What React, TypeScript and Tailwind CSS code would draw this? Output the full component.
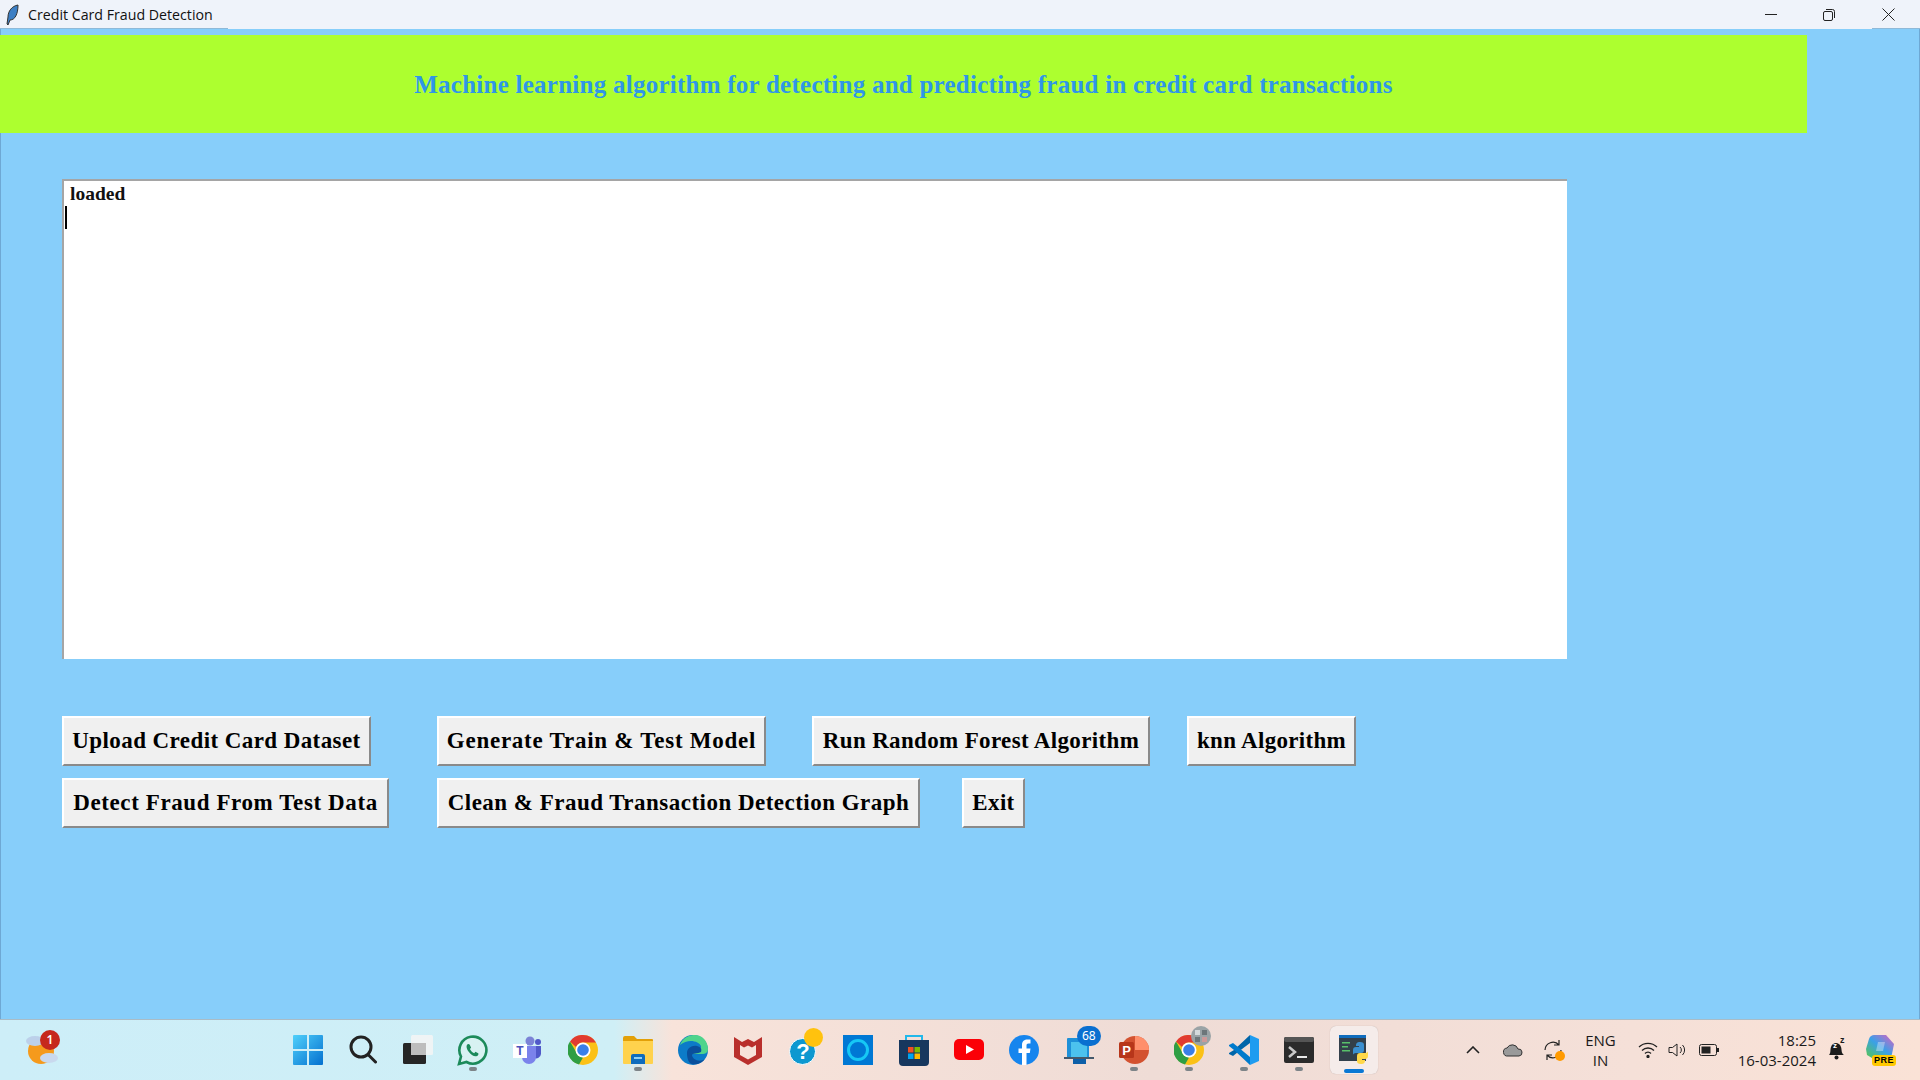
import type { ReactNode } from "react";

const serif = "font-['Liberation_Serif',serif]";

function TkButton({ label, width, className = "" }: { label: string; width: number; className?: string }) {
  return (
    <button
      style={{ width }}
      className={`h-[50px] shrink-0 border-2 border-t-white border-l-white border-r-[#8a8a8a] border-b-[#8a8a8a] bg-[#f0f0f0] text-center text-[23px] font-bold whitespace-nowrap text-black ${serif} ${className}`}
    >
      {label}
    </button>
  );
}

function Dot({ active }: { active?: boolean }) {
  return (
    <span
      className={
        active
          ? "absolute bottom-[1px] left-1/2 h-[4px] w-[20px] -translate-x-1/2 rounded-full bg-[#0a78d4]"
          : "absolute bottom-[3px] left-1/2 h-[4px] w-[8px] -translate-x-1/2 rounded-full bg-[#7d8488]"
      }
    />
  );
}

function Slot({ children, dot, active }: { children: ReactNode; dot?: boolean; active?: boolean }) {
  return (
    <div className="relative flex h-[48px] w-[55.1px] shrink-0 items-center justify-center">
      {active && (
        <span className="absolute top-0 left-[3.5px] h-[48px] w-[48px] rounded-md bg-[#f5ecea] shadow-[0_0_1px_rgba(0,0,0,0.25)]" />
      )}
      <div className="relative flex items-center justify-center">{children}</div>
      {dot && <Dot active={active} />}
    </div>
  );
}

function Badge({ n }: { n: string }) {
  return (
    <span className="absolute top-[-10px] left-[13px] flex h-[20px] w-[24px] items-center justify-center rounded-full bg-[#0a6fd0] font-['Noto_Sans',sans-serif] text-[12px] text-white">
      {n}
    </span>
  );
}

const WinLogo = () => (
  <svg width="30" height="30" viewBox="0 0 30 30">
    <defs>
      <linearGradient id="wl" x1="0" y1="0" x2="1" y2="1">
        <stop offset="0" stopColor="#4fd0fb" />
        <stop offset="1" stopColor="#0470cf" />
      </linearGradient>
    </defs>
    <path d="M0 1a1 1 0 0 1 1-1h13v14H0zM16 0h13a1 1 0 0 1 1 1v13H16zM0 16h14v14H1a1 1 0 0 1-1-1zM16 16h14v13a1 1 0 0 1-1 1H16z" fill="url(#wl)" />
  </svg>
);

const SearchIcon = () => (
  <svg width="28" height="30" viewBox="0 0 28 30" fill="none" stroke="#222" strokeWidth="3">
    <circle cx="12" cy="12" r="10" />
    <path d="M19.5 20l7 7" strokeLinecap="round" />
  </svg>
);

const TaskView = () => (
  <svg width="30" height="30" viewBox="0 0 30 30">
    <rect x="0" y="8" width="23" height="21" rx="1.5" fill="#262626" />
    <rect x="8" y="0" width="22" height="20" rx="1.5" fill="#f4f4f4" opacity="0.85" />
    <rect x="8" y="8" width="15" height="12" fill="#bdbdbd" />
  </svg>
);

const WhatsApp = () => (
  <svg width="31" height="31" viewBox="0 0 31 31" fill="none">
    <path d="M2 29l2-7.5A13.5 13.5 0 1 1 9.500 27z" stroke="#1c8a5a" strokeWidth="2.600" fill="#d8f2f2" />
    <path d="M11 9c-2 1-2 4 .5 7.500s6 5.500 8.500 4.500c1.500-.7 1.700-2.300 1.200-2.800l-2.700-1.400-1.300 1.500c-2-.8-3.400-2.300-4.300-4.200l1.200-1.300-1.300-3c-.5-.7-1.100-.9-1.800-.8z" fill="#1c8a5a" />
  </svg>
);

const Teams = () => (
  <svg width="30" height="28" viewBox="0 0 30 28">
    <circle cx="17" cy="5" r="4.500" fill="#7b83d6" />
    <circle cx="25" cy="6" r="3" fill="#5059c9" />
    <path d="M20 10h8v8a5 5 0 0 1-7 4z" fill="#5059c9" />
    <path d="M9 10h14v11a7 7 0 0 1-14 0z" fill="#7b83eb" />
    <rect x="0" y="8" width="14" height="14" fill="#fff" />
    <text x="7" y="19" textAnchor="middle" fontSize="12" fontWeight="700" fontFamily="Liberation Sans" fill="#4b53bc">T</text>
  </svg>
);

const Chrome = () => (
  <svg width="30" height="30" viewBox="0 0 30 30">
    <circle cx="15" cy="15" r="15" fill="#fbc116" />
    <path d="M15 0a15 15 0 0 1 13 7.500H15a7.500 7.500 0 0 0-7 4.500L2 6.500A15 15 0 0 1 15 0z" fill="#e13b30" />
    <path d="M2 6.500l7 12a7.500 7.500 0 0 0 6 4l-4 7A15 15 0 0 1 2 6.500z" fill="#2f9e44" />
    <circle cx="15" cy="15" r="7.500" fill="#fff" />
    <circle cx="15" cy="15" r="5.800" fill="#3a7fe8" />
  </svg>
);

const Folder = () => (
  <svg width="30" height="28" viewBox="0 0 30 28">
    <path d="M0 2a2 2 0 0 1 2-2h9l3 3h15a1 1 0 0 1 1 1v3H0z" fill="#e3a008" />
    <path d="M0 5h30v22a1 1 0 0 1-1 1H1a1 1 0 0 1-1-1z" fill="#ffd24d" />
    <path d="M8 20a2 2 0 0 1 2-2h10a2 2 0 0 1 2 2v8H8z" fill="#0f6cbd" />
    <rect x="11" y="21" width="8" height="2" fill="#8ed0f5" />
  </svg>
);

const Edge = () => (
  <svg width="30" height="30" viewBox="0 0 30 30">
    <circle cx="15" cy="15" r="15" fill="#0c7bc8" />
    <path d="M2 10C5 2 12 0 17 0c7 0 13 6 13 14 0 4-3 5-6 5H14c1-5 10-2 9-8C21 6 10 3 2 10z" fill="#4fd48c" />
    <path d="M9 18c0-5 5-8 10-7 4 1 5 3 4 6-3 2-9 1-9 3 0 4 7 8 13 4-3 4-8 6-13 5-4-1-5-7-5-11z" fill="#0a4f9c" />
  </svg>
);

const McAfee = () => (
  <svg width="28" height="30" viewBox="0 0 28 30">
    <path d="M0 2l8 5 6-3 6 3 8-5v20l-14 8-14-8zM6 10v10l8 4.500 8-4.500V10l-4 2.500-4-2-4 2z" fill="#b92f2c" />
  </svg>
);

const HelpIcon = () => (
  <div className="relative h-[30px] w-[34px]">
    <span className="absolute top-[3px] left-[3px] flex h-[27px] w-[27px] items-center justify-center rounded-full border border-white bg-[#0e98d0] font-['Liberation_Sans',sans-serif] text-[22px] font-bold text-white">
      ?
    </span>
    <span className="absolute top-[-7px] left-[18px] h-[19px] w-[19px] rounded-full bg-[#ffc20e]" />
  </div>
);

const Alexa = () => (
  <div className="flex h-[30px] w-[30px] items-center justify-center bg-[#0078d4]">
    <span className="h-[22px] w-[22px] rounded-full border-[3px] border-[#16c8f5]" />
  </div>
);

const Store = () => (
  <svg width="30" height="31" viewBox="0 0 30 31">
    <path d="M7 5V1h16v4" fill="none" stroke="#22b8ea" strokeWidth="2" />
    <path d="M0 5h30v22a4 4 0 0 1-4 4H4a4 4 0 0 1-4-4z" fill="#17375e" />
    <rect x="9" y="12" width="5.500" height="5.500" fill="#f25022" />
    <rect x="15.500" y="12" width="5.500" height="5.500" fill="#7fba00" />
    <rect x="9" y="18.500" width="5.500" height="5.500" fill="#00a4ef" />
    <rect x="15.500" y="18.500" width="5.500" height="5.500" fill="#ffb900" />
  </svg>
);

const YouTube = () => (
  <svg width="30" height="22" viewBox="0 0 30 22">
    <rect width="30" height="21" rx="5" fill="#fb0007" />
    <path d="M12 6l8 4.500-8 4.500z" fill="#fff" />
  </svg>
);

const Facebook = () => (
  <svg width="30" height="30" viewBox="0 0 30 30">
    <circle cx="15" cy="15" r="15" fill="#1685ee" />
    <path d="M13 30V18H9.500v-4.500H13V10c0-4 2.500-5.500 5.500-5.500h3v4h-2c-1.500 0-2 .7-2 2v3h4l-.7 4.500H17.500v12z" fill="#fff" />
  </svg>
);

const MailDevice = () => (
  <svg width="30" height="28" viewBox="0 0 30 28">
    <rect x="3" y="2" width="22" height="20" rx="1" fill="#1e90d8" />
    <rect x="7" y="6" width="16" height="16" fill="#4cc2ee" />
    <rect x="0" y="21" width="30" height="2" fill="#44586b" />
    <rect x="9" y="23" width="13" height="5" fill="#0d5fa8" />
  </svg>
);

const PowerPoint = () => (
  <svg width="30" height="30" viewBox="0 0 30 30">
    <circle cx="16" cy="15" r="14" fill="#d35230" />
    <path d="M16 1a14 14 0 0 1 14 14H16z" fill="#ff8f6b" />
    <rect x="0" y="7" width="15" height="16" rx="1.500" fill="#b7361a" />
    <text x="7.500" y="20" textAnchor="middle" fontSize="13" fontWeight="700" fontFamily="Liberation Sans" fill="#fff">P</text>
  </svg>
);

const Avatar = () => (
  <svg className="absolute top-[-9px] left-[17px]" width="20" height="20" viewBox="0 0 20 20">
    <circle cx="10" cy="10" r="10" fill="#9aa3a6" />
    <rect x="4" y="4" width="5" height="5" fill="#d5dadc" />
    <rect x="11" y="4" width="5" height="5" fill="#6c767a" />
    <rect x="4" y="11" width="5" height="5" fill="#6c767a" />
    <rect x="11" y="11" width="5" height="5" fill="#c99" />
  </svg>
);

const VSCode = () => (
  <svg width="30" height="30" viewBox="0 0 30 30">
    <path d="M21 0l9 4v22l-9 4z" fill="#1f9cf0" />
    <path d="M21 0v8L9 17l-5 4-4-2v-1l5-3 16-15z" fill="#0065a9" />
    <path d="M0 11v-1l4-2 5 4 12 10v8L5 15z" fill="#007acc" />
  </svg>
);

const Terminal = () => (
  <svg width="30" height="26" viewBox="0 0 30 26">
    <rect width="30" height="26" rx="2" fill="#2b2b2b" />
    <rect width="30" height="5" rx="2" fill="#555" />
    <path d="M5 10l6 5-6 5" fill="none" stroke="#c8c8c8" strokeWidth="2.500" />
    <rect x="13" y="19" width="10" height="2" fill="#e8e8e8" />
  </svg>
);

const PythonIde = () => (
  <svg width="30" height="30" viewBox="0 0 30 30">
    <rect width="27" height="26" fill="#33404b" />
    <rect width="27" height="3" fill="#0f6cbd" />
    <rect x="3" y="7" width="8" height="1.500" fill="#58c06a" />
    <rect x="3" y="11" width="6" height="1.500" fill="#58c06a" />
    <rect x="3" y="15" width="8" height="1.500" fill="#58c06a" />
    <path d="M14 20v-5c0-2 1-3 3-3h3v-1h-3c0-3 1-4 4-4s4 1 4 3v5c0 2-1 3-3 3h-5c-2 0-3 1-3 2z" fill="#3b8fd0" />
    <path d="M29 16v5c0 2-1 3-3 3h-3v1h3c0 3-1 4-4 4s-4-1-4-3v-5c0-2 1-3 3-3h5c2 0 3-1 3-2z" fill="#ffd84a" />
  </svg>
);

const Weather = () => (
  <div className="relative h-[36px] w-[36px]">
    <svg width="32" height="34" viewBox="0 0 32 34" className="absolute top-[0px] left-0">
      <circle cx="15" cy="19" r="13" fill="#f59a1c" />
      <ellipse cx="9" cy="9" rx="9" ry="5" fill="#bcd0ea" />
      <ellipse cx="23" cy="26" rx="9" ry="5" fill="#c9d9ee" />
    </svg>
    <span className="absolute top-[-2px] left-[14px] flex h-[20px] w-[20px] items-center justify-center rounded-full bg-[#c6281c] font-['Noto_Sans',sans-serif] text-[12px] font-semibold text-white">
      1
    </span>
  </div>
);

const Copilot = () => (
  <div className="relative h-[32px] w-[30px]">
    <svg width="28" height="26" viewBox="0 0 28 26">
      <defs>
        <linearGradient id="cp" x1="0" y1="1" x2="1" y2="0">
          <stop offset="0" stopColor="#57c84d" />
          <stop offset="0.5" stopColor="#3aa0e8" />
          <stop offset="1" stopColor="#e05fc0" />
        </linearGradient>
      </defs>
      <path d="M8 1h12l8 9-2 10c-1 3-3 4-6 4H6l-5-3-1-6 3-10c1-3 3-4 5-4z" fill="url(#cp)" />
      <path d="M12 8h7l-2 9h-7z" fill="#fff" opacity="0.35" />
    </svg>
    <span className="absolute right-0 bottom-0 rounded-[3px] bg-[#ffc800] px-[2px] font-['Liberation_Sans',sans-serif] text-[9px] leading-[11px] font-bold tracking-[0.5px] text-black">
      PRE
    </span>
  </div>
);

export default function App() {
  return (
    <div className="flex h-[1080px] w-[1920px] flex-col overflow-hidden bg-[#87cefa]">
      {/* title bar */}
      <div className="relative flex h-[29px] shrink-0 items-center bg-[#eff3fa]">
        <svg className="ml-[5px]" width="16" height="22" viewBox="0 0 16 22">
          <path d="M13 1C7 2 3 7 3 13l-1 7 1 1 2-5c5 0 8-6 8-15z" fill="#3d7fc4" stroke="#333" strokeWidth="1" />
        </svg>
        <span className="ml-[7px] font-['Open_Sans',sans-serif] text-[14.2px] text-[#111]">Credit Card Fraud Detection</span>
        <div className="ml-auto flex h-full items-center">
          <svg className="mr-[46px]" width="12" height="2" viewBox="0 0 12 2">
            <rect width="12" height="1" fill="#222" />
          </svg>
          <svg className="mr-[47px]" width="12" height="12" viewBox="0 0 12 12" fill="none" stroke="#222">
            <rect x="0.500" y="2.500" width="9" height="9" rx="1.500" />
            <path d="M3 .5h6.500a2 2 0 0 1 2 2V9" />
          </svg>
          <svg className="mr-[25px]" width="13" height="13" viewBox="0 0 13 13" stroke="#222">
            <path d="M.5.5l12 12M12.500.5l-12 12" />
          </svg>
        </div>
        <span className="absolute bottom-0 left-0 h-px w-[228px] bg-[#8fb9d8]" />
        <span className="absolute right-0 bottom-0 h-px w-[48px] bg-[#8fb9d8]" />
      </div>

      {/* form */}
      <div className="flex min-h-0 flex-1 flex-col border-r border-l border-[#6ea8d4]">
        <div className={`mt-[6px] -ml-px flex h-[98px] w-[1807px] shrink-0 items-center justify-center bg-[#adff2f] pt-[2px] text-[25px] font-bold tracking-[0.25px] text-[#2f96e8] ${serif}`}>
          Machine learning algorithm for detecting and predicting fraud in credit card transactions
        </div>

        <div className={`mt-[46px] ml-[61px] h-[480px] w-[1505px] shrink-0 border-t-2 border-l-2 border-[#a5a5a5] bg-white pt-[1px] pl-[6px] text-[19.5px] leading-[23px] font-bold text-[#111] ${serif}`}>
          <div>loaded</div>
          <div className="mt-[1px] -ml-[5px] h-[23px] w-[2px] bg-black" />
        </div>

        <div className="mt-[57px] ml-[61px] flex">
          <TkButton label="Upload Credit Card Dataset" width={309} className="tracking-[0.42px]" />
          <TkButton label="Generate Train & Test Model" width={329} className="ml-[66px] tracking-[0.75px]" />
          <TkButton label="Run Random Forest Algorithm" width={338} className="ml-[46px] tracking-[0.35px]" />
          <TkButton label="knn Algorithm" width={169} className="ml-[37px] tracking-[0.3px]" />
        </div>
        <div className="mt-[12px] ml-[61px] flex">
          <TkButton label="Detect Fraud From Test Data" width={327} className="tracking-[0.6px]" />
          <TkButton label="Clean & Fraud Transaction Detection Graph" width={483} className="ml-[48px] tracking-[0.48px]" />
          <TkButton label="Exit" width={63} className="ml-[42px] tracking-[0.35px]" />
        </div>
      </div>

      {/* taskbar */}
      <div className="relative flex h-[61px] shrink-0 items-center border-t border-[#a9bcc6] bg-[linear-gradient(90deg,#cdeef8_0%,#cfeff6_32%,#f8e3da_35%,#efdcd6_60%,#f5e0d8_85%,#fae2d6_100%)]">
        <div className="ml-[26px] w-[254px] shrink-0">
          <Weather />
        </div>
        <div className="flex">
          <Slot><WinLogo /></Slot>
          <Slot><SearchIcon /></Slot>
          <Slot><TaskView /></Slot>
          <Slot dot><WhatsApp /></Slot>
          <Slot><Teams /></Slot>
          <Slot><Chrome /></Slot>
          <Slot dot><Folder /></Slot>
          <Slot><Edge /></Slot>
          <Slot><McAfee /></Slot>
          <Slot><HelpIcon /></Slot>
          <Slot><Alexa /></Slot>
          <Slot><Store /></Slot>
          <Slot><YouTube /></Slot>
          <Slot><Facebook /></Slot>
          <Slot><MailDevice /><Badge n="68" /></Slot>
          <Slot dot><PowerPoint /></Slot>
          <Slot dot><Chrome /><Avatar /></Slot>
          <Slot dot><VSCode /></Slot>
          <Slot dot><Terminal /></Slot>
          <Slot dot active><PythonIde /></Slot>
        </div>

        {/* tray */}
        <div className="ml-auto flex items-center font-['Open_Sans',sans-serif] text-[15px] text-[#1a1a1a]">
          <svg width="14" height="8" viewBox="0 0 14 8" fill="none" stroke="#222" strokeWidth="1.600" className="mr-[23px]">
            <path d="M1 7l6-6 6 6" />
          </svg>
          <svg width="20" height="14" viewBox="0 0 20 14" className="mr-[20px]">
            <path d="M5 13a4 4 0 0 1-1-8 6 6 0 0 1 11 1 3.500 3.500 0 0 1 1 7z" fill="#9a9a9a" stroke="#333" />
          </svg>
          <div className="relative mr-[20px] h-[24px] w-[22px]">
            <svg width="20" height="24" viewBox="0 0 20 24" fill="none" stroke="#222" strokeWidth="1.200">
              <path d="M2 12a8 8 0 0 1 14-5M18 12a8 8 0 0 1-14 5M16 2v5h-5M4 22v-5h5" />
            </svg>
            <span className="absolute right-0 bottom-[1px] h-[10px] w-[10px] rounded-full bg-[#ff9a00]" />
          </div>
          <div className="mr-[22px] text-center leading-[20px]">
            <div>ENG</div>
            <div>IN</div>
          </div>
          <svg width="20" height="16" viewBox="0 0 20 16" fill="none" stroke="#222" strokeWidth="1.300" className="mr-[10px]">
            <path d="M1 5a13 13 0 0 1 18 0M4 8.500a8.500 8.500 0 0 1 12 0M7 11.500a4 4 0 0 1 6 0" />
            <circle cx="10" cy="14.500" r="1" fill="#222" />
          </svg>
          <svg width="20" height="16" viewBox="0 0 20 16" fill="none" stroke="#222" className="mr-[11px]">
            <path d="M1 5.500h3.500L9 2v12l-4.500-3.500H1zM12 5a4 4 0 0 1 0 6M14.500 3a7 7 0 0 1 0 10" />
          </svg>
          <svg width="20" height="12" viewBox="0 0 20 12" className="mr-[19px]">
            <rect x="0.500" y="0.500" width="17" height="11" rx="2" fill="none" stroke="#222" />
            <rect x="2.500" y="2.500" width="9" height="7" fill="#222" />
            <rect x="18" y="4" width="2" height="4" fill="#222" />
          </svg>
          <div className="mr-[12px] text-right leading-[20px]">
            <div>18:25</div>
            <div>16-03-2024</div>
          </div>
          <div className="relative mr-[20px] flex h-[22px] w-[18px] items-center justify-center">
            <svg width="18" height="20" viewBox="0 0 18 20">
              <path d="M1 15c2-2 1-5 2-8s3-4 5-4 4 1 5 4 0 6 3 8z" fill="#1c1c1c" />
              <circle cx="8.500" cy="17.500" r="2" fill="#1c1c1c" />
            </svg>
            <span className="absolute top-[3px] left-[5px] font-['Liberation_Sans',sans-serif] text-[8px] leading-none font-bold text-white">z</span>
            <span className="absolute top-[-3px] left-[12px] font-['Liberation_Sans',sans-serif] text-[9px] leading-none font-bold text-[#1c1c1c]">z</span>
          </div>
          <div className="mr-[24px]">
            <Copilot />
          </div>
        </div>
      </div>
    </div>
  );
}
